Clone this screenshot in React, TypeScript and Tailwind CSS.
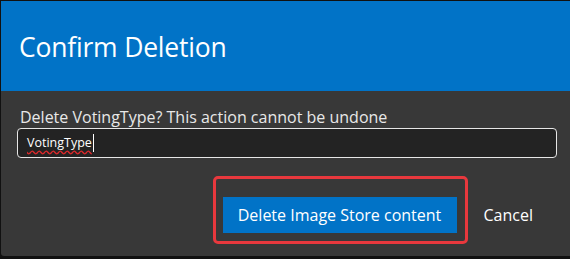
export default function App() {
  return (
    <div className="w-[570px] h-[259px] bg-[#111111] pt-px pl-px pb-[3px] overflow-hidden font-['Open_Sans','Noto_Sans',sans-serif]">
      <div className="h-full flex flex-col bg-[#383838] rounded-bl-[3px] overflow-hidden">
        <div className="h-[90px] bg-[#0173c7] flex items-center pl-[18px] pt-[3px]">
          <h1 className="text-[26.5px] text-white font-normal tracking-[-0.2px]">Confirm Deletion</h1>
        </div>
        <div className="px-[16px] pt-[16px]">
          <p className="text-[16px] text-[#e8e8e8] leading-[20px] pl-[3px]">
            Delete VotingType? This action cannot be undone
          </p>
          <div className="mt-[1px] h-[30px] w-[540px] bg-[#232323] border border-[#e6e6e6] rounded-[4px] flex items-center pl-[9px]">
            <span className="text-[12.5px] text-white underline decoration-wavy decoration-[#e0282a] underline-offset-[3px]">
              VotingType
            </span>
            <span className="ml-px w-px h-[18px] bg-white" />
          </div>
        </div>
        <div className="flex items-center justify-end pr-[37px] mt-[18px]">
          <div className="border-[3px] border-[#e8383d] rounded-[5px] pl-[7px] pr-[8px] pt-[18px] pb-[8px]">
            <button className="h-[36px] w-[234px] bg-[#0173c7] text-white text-[16px]">
              Delete Image Store content
            </button>
          </div>
          <button className="ml-[16px] mt-[10px] text-[16px] text-white">Cancel</button>
        </div>
      </div>
    </div>
  );
}
